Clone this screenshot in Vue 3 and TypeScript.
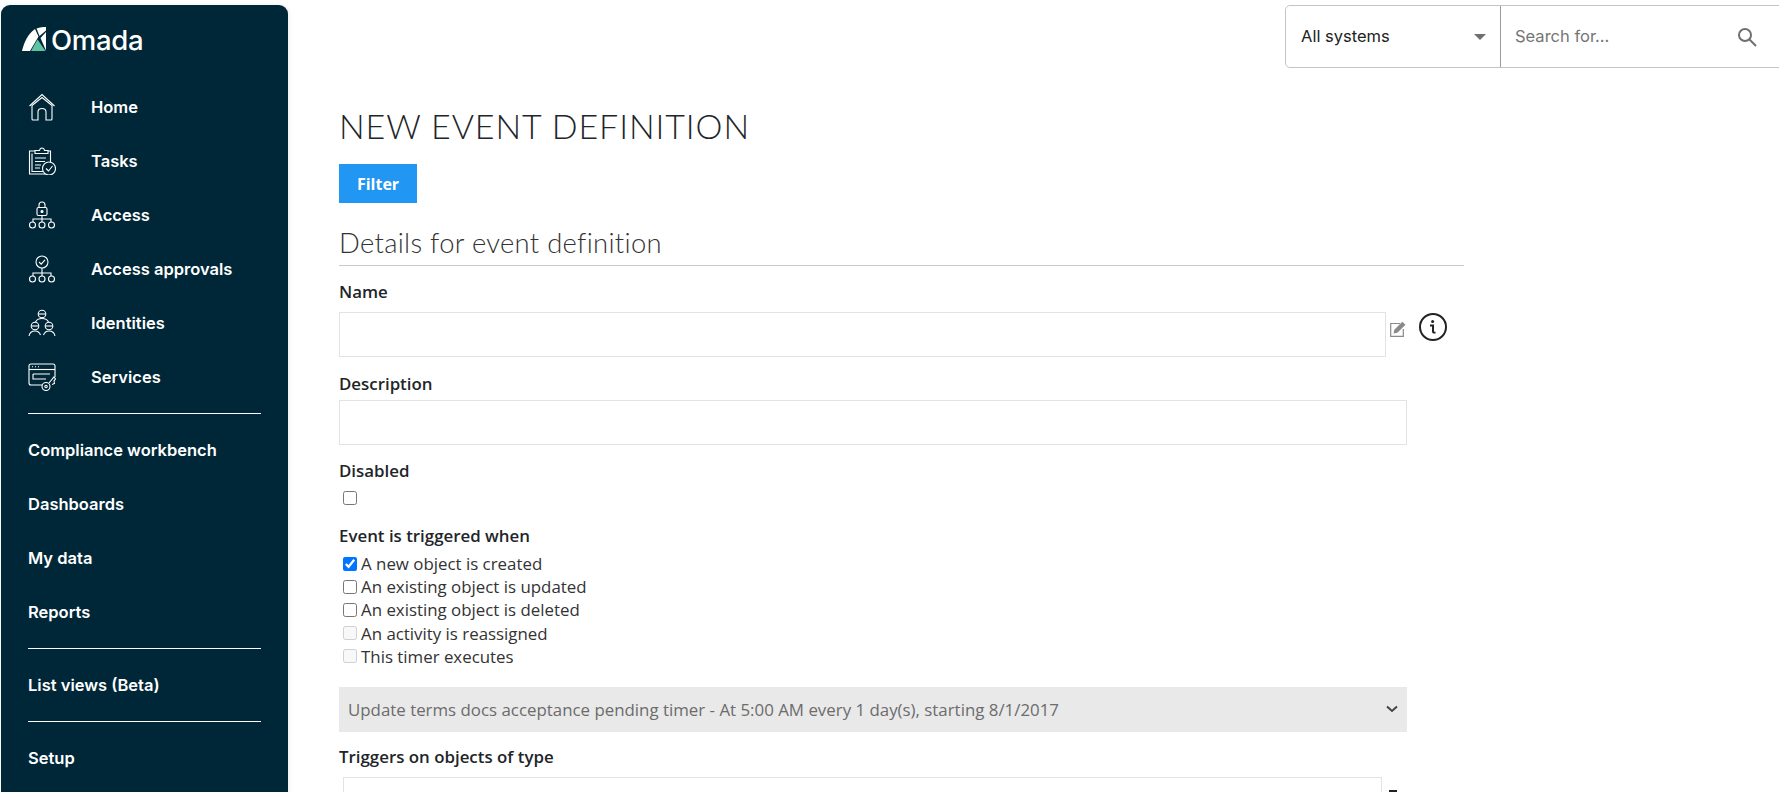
<script setup lang="ts">
const nav = [
  { label: 'Home', icon: 'home' },
  { label: 'Tasks', icon: 'tasks' },
  { label: 'Access', icon: 'access' },
  { label: 'Access approvals', icon: 'approvals' },
  { label: 'Identities', icon: 'identities' },
  { label: 'Services', icon: 'services' },
]
const groupOne = ['Compliance workbench', 'Dashboards', 'My data', 'Reports']
const triggers = [
  { label: 'A new object is created', checked: true, disabled: false },
  { label: 'An existing object is updated', checked: false, disabled: false },
  { label: 'An existing object is deleted', checked: false, disabled: false },
  { label: 'An activity is reassigned', checked: false, disabled: true },
  { label: 'This timer executes', checked: false, disabled: true },
]
</script>

<template>
  <div class="page">
    <aside class="sidebar">
      <div class="logo">
        <svg class="logo-mark" viewBox="0 0 24 24" width="24" height="24">
          <path d="M0 24 C2 15 6 7 13 2 L16.5 9.5 L8 24 Z" fill="#fff" />
          <path d="M14.5 1.5 C18 .3 21 0 24 0 V3.5 L17.5 9 Z" fill="#fff" />
          <path d="M18.5 11 L24 5 V23.5 Z" fill="#fff" />
          <path d="M9 24 L15.5 12.5 L23.5 24 Z" fill="#5fc3a0" />
        </svg>
        <span class="logo-text">Omada</span>
      </div>
      <nav class="main-nav">
        <a v-for="item in nav" :key="item.label" class="nav-item">
          <svg class="nav-icon" viewBox="0 0 28 28" fill="none" stroke="#fff" stroke-width="1.1">
            <template v-if="item.icon === 'home'">
              <path d="M1.5 13 L14 1.5 L26.5 13" />
              <path d="M4 12.5 L14 4.5 L24 12.5 V26 Q24 27 23 27 H18 V19 Q18 15.5 14 15.5 Q10 15.5 10 19 V27 H5 Q4 27 4 26 Z" />
            </template>
            <template v-else-if="item.icon === 'tasks'">
              <path d="M7 4 H1.5 V27 H17" />
              <path d="M4 6.5 V24.5 H15" />
              <path d="M7 6.5 V3.5 H11.5 Q12 1 14 1 Q16 1 16.5 3.5 H20 V6.5 Z" />
              <path d="M20 4 H22.5 V15" />
              <path d="M7 11 H18 M7 14.5 H17 M7 18 H13 M7 21 H12" />
              <circle cx="21" cy="21.5" r="6.5" />
              <path d="M18 21.5 L20.5 24 L24.5 19" />
            </template>
            <template v-else-if="item.icon === 'access'">
              <rect x="9" y="6.5" width="10" height="8" rx="1.5" />
              <path d="M11 6.5 V4 Q11 1 14 1 Q17 1 17 4 V6.5" />
              <circle cx="14" cy="10.5" r="1" fill="#fff" />
              <path d="M14 14.5 V18 M5 21 V18 H23 V21 M14 18 V21" />
              <circle cx="4.5" cy="24" r="3" />
              <circle cx="14" cy="24" r="3" />
              <circle cx="23.5" cy="24" r="3" />
            </template>
            <template v-else-if="item.icon === 'approvals'">
              <circle cx="14" cy="7" r="6" />
              <path d="M11 7 L13.2 9.2 L17 4.8" />
              <path d="M14 13 V18 M5 21 V18 H23 V21 M14 18 V21" />
              <circle cx="4.5" cy="24" r="3" />
              <circle cx="14" cy="24" r="3" />
              <circle cx="23.5" cy="24" r="3" />
            </template>
            <template v-else-if="item.icon === 'identities'">
              <circle cx="14" cy="5" r="3.8" />
              <path d="M10.5 5 H17.5" />
              <path d="M7.5 13 Q9 9.5 14 9.5 Q19 9.5 20.5 13" />
              <circle cx="7" cy="17" r="3.8" />
              <path d="M3.5 17 H10.5" />
              <path d="M1 27 Q2 22 7 22 Q11 22 12.5 26" />
              <circle cx="21" cy="17" r="3.8" />
              <path d="M17.5 17 H24.5" />
              <path d="M15.5 26 Q17 22 21 22 Q26 22 27 27" />
            </template>
            <template v-else>
              <path d="M27 14 V3 Q27 1 25 1 H3 Q1 1 1 3 V20 Q1 22 3 22 H14" />
              <path d="M1 6.5 H27" />
              <path d="M4 3.8 H5 M7 3.8 H8 M10 3.8 H11" />
              <path d="M5 11 H22 M5 11 V16 H18" />
              <path d="M21 20 L26 14 L27.5 16 L26 18 L26.5 20.5 L24 21.5" />
              <circle cx="18" cy="23.5" r="4" />
              <circle cx="18" cy="23.5" r="1.2" />
            </template>
          </svg>
          <span>{{ item.label }}</span>
        </a>
      </nav>
      <hr class="rule" />
      <nav class="plain-nav">
        <a v-for="item in groupOne" :key="item" class="plain-item">{{ item }}</a>
      </nav>
      <hr class="rule" />
      <nav class="plain-nav">
        <a class="plain-item">List views (Beta)</a>
      </nav>
      <hr class="rule" />
      <nav class="plain-nav">
        <a class="plain-item">Setup</a>
      </nav>
    </aside>

    <main class="content">
      <div class="topbar">
        <div class="searchbox">
          <div class="system">
            <span class="system-text">All systems</span>
            <i class="caret"></i>
          </div>
          <div class="search">
            <span class="search-text">Search for...</span>
            <svg viewBox="0 0 20 20" width="20" height="20" fill="none" stroke="#6f6f6f" stroke-width="2">
              <circle cx="8" cy="8" r="6" />
              <path d="M12.5 12.5 L19 19" />
            </svg>
          </div>
        </div>
      </div>

      <div class="form">
        <h1>NEW EVENT DEFINITION</h1>
        <button class="filter" type="button">Filter</button>
        <h2>Details for event definition</h2>

        <label class="field-label name-label">Name</label>
        <div class="name-row">
          <div class="input name-input"></div>
          <svg class="edit" viewBox="0 0 16 16" width="16" height="16" fill="none" stroke="#8a8a8a" stroke-width="1.2">
            <path d="M10 2.5 H.7 V15.3 H13.3 V8" />
            <path d="M3.5 12.5 L4.3 8.8 L12.3 .8 L15.5 3.8 L7.4 11.8 Z" fill="#8a8a8a" stroke="none" />
          </svg>
          <svg class="info" viewBox="0 0 28 28" width="28" height="28" fill="none" stroke="#222">
            <circle cx="14" cy="14" r="13" stroke-width="2" />
            <circle cx="13.6" cy="8.4" r="1.5" fill="#222" stroke="none" />
            <path d="M11 12.5 H14 V18.5 Q14 20 16.5 19.5" stroke-width="2" />
          </svg>
        </div>

        <label class="field-label desc-label">Description</label>
        <div class="input desc-input"></div>

        <label class="field-label disabled-label">Disabled</label>
        <input class="check solo" type="checkbox" />

        <label class="field-label event-label">Event is triggered when</label>
        <div class="checks">
          <label v-for="t in triggers" :key="t.label" class="check-row">
            <input class="check" type="checkbox" :checked="t.checked" :disabled="t.disabled" />
            <span>{{ t.label }}</span>
          </label>
        </div>

        <div class="timer">
          <span>Update terms docs acceptance pending timer - At 5:00 AM every 1 day(s), starting 8/1/2017</span>
          <svg viewBox="0 0 12 8" width="12" height="8" fill="none" stroke="#444" stroke-width="2">
            <path d="M1 1.5 L6 6 L11 1.5" />
          </svg>
        </div>

        <label class="field-label trig-label">Triggers on objects of type</label>
        <div class="type-row">
          <div class="input type-input"></div>
          <span class="type-help"></span>
        </div>
      </div>
    </main>
  </div>
</template>

<style>
html, body { margin: 0; padding: 0; background: #fff; overflow: hidden; }
</style>

<style scoped>
.page {
  display: flex;
  width: 1779px;
  height: 792px;
  overflow: hidden;
  font-family: "Open Sans", sans-serif;
  color: #212529;
}
.sidebar {
  flex: none;
  box-sizing: border-box;
  width: 287px;
  height: 792px;
  margin: 5px 0 0 1px;
  padding: 0 27px;
  background: #002738;
  border-radius: 9px 9px 0 0;
  color: #fff;
  font-family: Inter, "Open Sans", sans-serif;
  box-shadow: 1px 0 4px rgba(0, 0, 0, 0.08);
}
.logo {
  display: flex;
  align-items: center;
  height: 27px;
  margin: 20px 0 0 -6px;
  gap: 5px;
}
.logo-mark { flex: none; }
.logo-text { padding-top: 2px; font-size: 27.5px; font-weight: 500; letter-spacing: -0.3px; }
.main-nav { margin-top: 28px; }
.nav-item {
  display: flex;
  align-items: center;
  height: 54px;
  font-size: 16.5px;
  font-weight: 600;
}
.nav-icon { flex: none; width: 28px; height: 28px; margin-right: 35px; }
.rule {
  margin: 9px 0 0;
  border: 0;
  border-top: 1px solid #fff;
}
.plain-nav { padding: 9px 0 0; }
.plain-item {
  display: flex;
  align-items: center;
  height: 54px;
  font-size: 16.5px;
  font-weight: 600;
}
.plain-nav + .rule { margin-top: 9px; }
.content { flex: 1; min-width: 0; }
.topbar { display: flex; justify-content: flex-end; }
.searchbox {
  display: flex;
  box-sizing: border-box;
  width: 520px;
  height: 63px;
  margin: 5px -26px 0 0;
  border: 1px solid #c4c4c4;
  border-radius: 5px;
  font-family: Inter, sans-serif;
  font-size: 16.5px;
}
.system-text,
.search-text { padding-bottom: 2px; }
.system {
  flex: none;
  display: flex;
  align-items: center;
  justify-content: space-between;
  box-sizing: border-box;
  width: 215px;
  padding: 0 14px 0 15px;
  border-right: 1px solid #9a9a9a;
  color: #222;
}
.caret {
  width: 0;
  height: 0;
  border-left: 6px solid transparent;
  border-right: 6px solid transparent;
  border-top: 6px solid #6f6f6f;
}
.search {
  flex: 1;
  display: flex;
  align-items: center;
  justify-content: space-between;
  padding: 0 47px 0 14px;
  color: #757575;
}
.form {
  width: 1125px;
  margin-left: 51px;
}
h1 {
  margin: 38px 0 0;
  font-family: Lato, sans-serif;
  font-size: 34px;
  line-height: 40px;
  font-weight: 300;
  letter-spacing: 0.9px;
  color: #212529;
}
.filter {
  display: block;
  width: 78px;
  height: 39px;
  margin-top: 18px;
  padding: 0;
  border: 0;
  background: #2196f3;
  color: #fff;
  font-family: "Open Sans", sans-serif;
  font-size: 16px;
  font-weight: 700;
}
h2 {
  margin: 25px 0 0;
  padding-bottom: 5px;
  height: 32px;
  border-bottom: 1px solid #c9c9c9;
  font-family: Lato, sans-serif;
  font-size: 27.4px;
  line-height: 30px;
  font-weight: 300;
  letter-spacing: 0.3px;
  color: #333;
}
.field-label {
  display: block;
  font-size: 16.875px;
  line-height: 20px;
  font-weight: 600;
  color: #212529;
}
.name-label { margin-top: 16px; }
.input {
  box-sizing: border-box;
  border: 1px solid #e3e3e3;
  background: #fff;
}
.name-row { display: flex; align-items: flex-start; margin-top: 10px; }
.name-input { width: 1047px; height: 45px; }
.edit { margin: 9px 0 0 4px; }
.info { margin: 1px 0 0 13px; }
.desc-label { margin-top: 17px; }
.desc-input { width: 1068px; height: 45px; margin-top: 6px; }
.disabled-label { margin-top: 16px; }
.check {
  width: 14px;
  height: 14px;
  margin: 0;
  flex: none;
}
.solo { display: block; margin: 10px 0 0 4px; }
.event-label { margin-top: 21px; }
.checks { margin-top: 6px; }
.check-row {
  display: flex;
  align-items: center;
  height: 23.2px;
  gap: 4px;
  padding-left: 4px;
  font-size: 16.875px;
  color: #333;
}
.timer {
  display: flex;
  align-items: center;
  justify-content: space-between;
  box-sizing: border-box;
  width: 1068px;
  height: 45px;
  margin-top: 19px;
  padding: 0 9px;
  background: #e9e9e9;
  font-size: 16.875px;
  color: #6c6c6c;
}
.trig-label { margin-top: 15px; }
.type-row { display: flex; margin-top: 10px; }
.type-input { width: 1039px; height: 45px; margin-left: 4px; }
.type-help {
  width: 8px;
  height: 2px;
  margin: 13px 0 0 7px;
  background: #222;
}
</style>
